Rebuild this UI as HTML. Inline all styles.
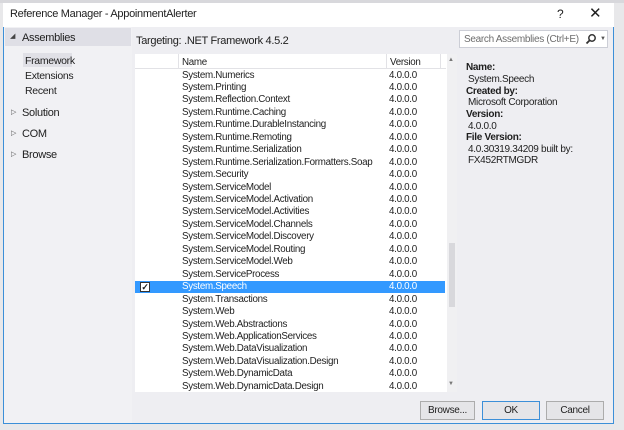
<!DOCTYPE html>
<html><head><style>
*{margin:0;padding:0;box-sizing:border-box}
body{width:624px;height:430px;background:#e8e8ea;position:relative;overflow:hidden;font-family:"Liberation Sans",sans-serif;font-size:10px;letter-spacing:-0.3px;color:#1e1e1e}
.a{position:absolute;white-space:nowrap}
#win{position:absolute;left:3px;top:3px;width:611px;height:421px;background:#eeeef2;border:1px solid #3c8fd8;border-top:none}
.r{font-size:9.8px}
</style></head><body>
<div class="a" style="left:0;top:0;width:624px;height:3px;background:#d8d8dc"></div>
<div id="win"></div>
<div class="a" style="left:3px;top:3px;width:611px;height:24px;background:#fff"></div>
<div class="a" style="left:10px;top:8px;font-size:11px">Reference Manager - AppoinmentAlerter</div>
<div class="a" style="left:557px;top:7px;font-size:12px">?</div>
<div class="a" style="left:589px;top:4px;font-size:15px">✕</div>
<div class="a" style="left:4px;top:27px;width:128px;height:396px;background:#f1f1f4"></div>
<div class="a" style="left:5px;top:28px;width:126px;height:18px;background:#dfdfe6"></div>
<div class="a" style="left:10px;top:32px;font-size:7px;color:#444">◢</div>
<div class="a" style="left:22px;top:32px;font-size:11px">Assemblies</div>
<div class="a" style="left:23px;top:53px;width:49px;height:14px;background:#e0e0e6"></div>
<div class="a" style="left:25px;top:55px;font-size:10.5px">Framework</div>
<div class="a" style="left:25px;top:70px;font-size:10.5px">Extensions</div>
<div class="a" style="left:25px;top:85px;font-size:10.5px">Recent</div>
<div class="a" style="left:11px;top:108px;font-size:7px;color:#555">▷</div>
<div class="a" style="left:22px;top:107px;font-size:11px">Solution</div>
<div class="a" style="left:11px;top:129px;font-size:7px;color:#555">▷</div>
<div class="a" style="left:22px;top:128px;font-size:11px">COM</div>
<div class="a" style="left:11px;top:150px;font-size:7px;color:#555">▷</div>
<div class="a" style="left:22px;top:149px;font-size:11px">Browse</div>
<div class="a" style="left:136px;top:35px;font-size:11px">Targeting: .NET Framework 4.5.2</div>
<div class="a" style="left:459px;top:30px;width:149px;height:18px;background:#fff;border:1px solid #ccced6"></div>
<div class="a" style="left:464px;top:34px;color:#6d6d6d">Search Assemblies (Ctrl+E)</div>
<svg class="a" style="left:585px;top:33px" width="12" height="12" viewBox="0 0 12 12"><circle cx="7" cy="5" r="3.2" fill="none" stroke="#333" stroke-width="1.5"/><path d="M4.6 7.4L1.5 10.5" stroke="#333" stroke-width="1.8"/></svg>
<div class="a" style="left:600px;top:36px;font-size:6px;color:#555">▼</div>
<div class="a" style="left:135px;top:54px;width:322px;height:338px;background:#fff"></div>
<div class="a" style="left:135px;top:54px;width:311px;height:15px;border-bottom:1px solid #e2e2e6"></div>
<div class="a" style="left:178px;top:54px;width:1px;height:15px;background:#e2e2e6"></div>
<div class="a" style="left:386px;top:54px;width:1px;height:15px;background:#e2e2e6"></div>
<div class="a" style="left:440px;top:54px;width:1px;height:15px;background:#e2e2e6"></div>
<div class="a r" style="left:182px;top:57px">Name</div>
<div class="a r" style="left:390px;top:57px">Version</div>
<div class="a" style="left:447px;top:54px;width:10px;height:338px;background:#f0f0f2"></div>
<div class="a" style="left:448px;top:57px;font-size:6px;color:#777">▲</div>
<div class="a" style="left:449px;top:243px;width:6px;height:64px;background:#d8d8dc"></div>
<div class="a" style="left:448px;top:381px;font-size:6px;color:#777">▼</div>
<div class="a" style="left:135px;top:281px;width:310px;height:12px;background:#3399ff"></div>
<div class="a" style="left:140px;top:282px;width:10px;height:10px;background:#fff;border:1px solid #333;font-size:9px;line-height:8px;text-align:center;font-weight:bold">✓</div>
<div id="rows"></div>
<div class="a" style="left:466px;top:62px;font-weight:bold">Name:</div>
<div class="a" style="left:468px;top:74px">System.Speech</div>
<div class="a" style="left:466px;top:86px;font-weight:bold">Created by:</div>
<div class="a" style="left:468px;top:97px">Microsoft Corporation</div>
<div class="a" style="left:466px;top:109px;font-weight:bold">Version:</div>
<div class="a" style="left:468px;top:121px">4.0.0.0</div>
<div class="a" style="left:466px;top:132px;font-weight:bold">File Version:</div>
<div class="a" style="left:468px;top:144px">4.0.30319.34209 built by:</div>
<div class="a" style="left:468px;top:155px">FX452RTMGDR</div>
<div class="a" style="left:420px;top:401px;width:55px;height:19px;background:#e5e5e8;border:1px solid #acacac;text-align:center;line-height:17px">Browse...</div>
<div class="a" style="left:482px;top:401px;width:58px;height:19px;background:#e5e5e8;border:1px solid #3c8fd8;text-align:center;line-height:17px">OK</div>
<div class="a" style="left:546px;top:401px;width:58px;height:19px;background:#e5e5e8;border:1px solid #acacac;text-align:center;line-height:17px">Cancel</div>
<script>
var n=["Numerics","Printing","Reflection.Context","Runtime.Caching","Runtime.DurableInstancing","Runtime.Remoting","Runtime.Serialization","Runtime.Serialization.Formatters.Soap","Security","ServiceModel","ServiceModel.Activation","ServiceModel.Activities","ServiceModel.Channels","ServiceModel.Discovery","ServiceModel.Routing","ServiceModel.Web","ServiceProcess","Speech","Transactions","Web","Web.Abstractions","Web.ApplicationServices","Web.DataVisualization","Web.DataVisualization.Design","Web.DynamicData","Web.DynamicData.Design"];
var h="";n.forEach(function(s,i){var t=69.5+i*12.45,c=i==17?"color:#fff;":"";h+='<div class="a r" style="'+c+'left:182px;top:'+t+'px">System.'+s+'</div><div class="a r" style="'+c+'left:389px;top:'+t+'px">4.0.0.0</div>';});
document.getElementById("rows").outerHTML=h;
</script>
</body></html>
